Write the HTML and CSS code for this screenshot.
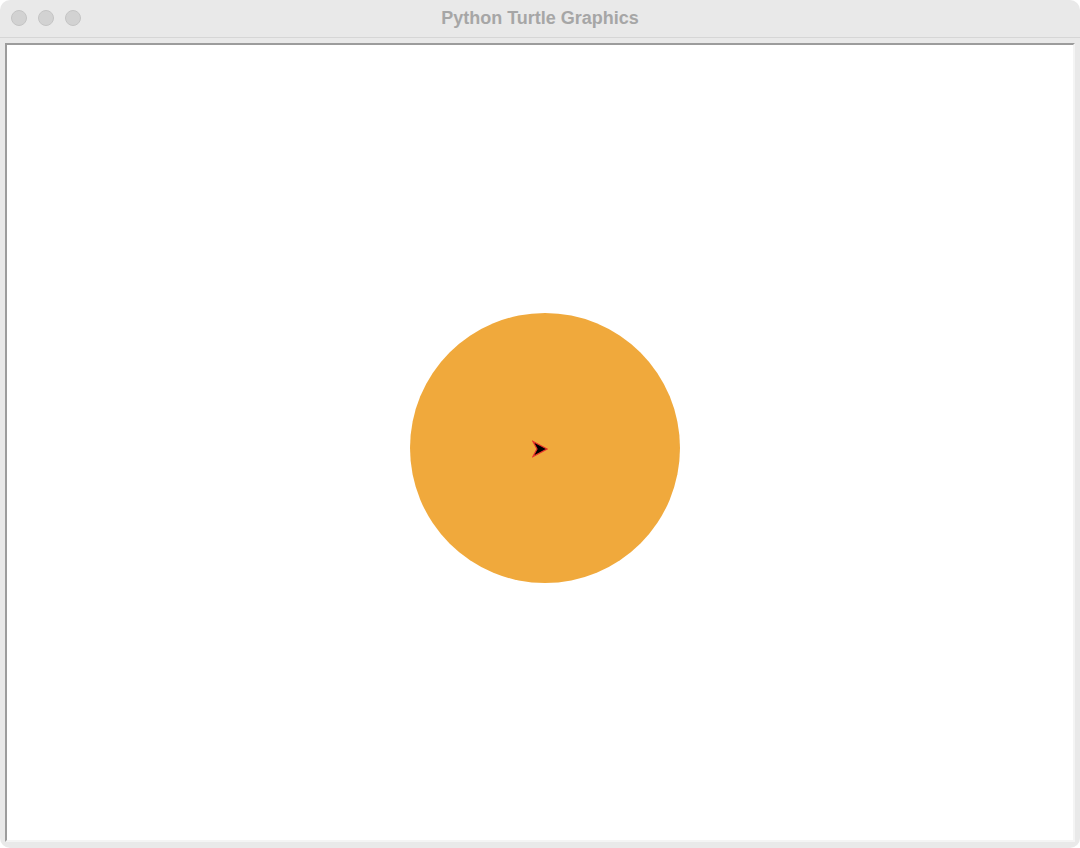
FILE: index.html
```html
<!DOCTYPE html>
<html>
<head>
<meta charset="utf-8">
<link rel="stylesheet" href="styles.css">
</head>
<body>
<div class="window">
  <div class="titlebar">
    <div class="lights">
      <span class="light"></span>
      <span class="light"></span>
      <span class="light"></span>
    </div>
    <div class="title">Python Turtle Graphics</div>
  </div>
  <div class="content">
    <div class="canvas">
      <div class="dot"></div>
      <svg class="turtle" width="16" height="18" viewBox="0 0 16 18">
        <polygon points="15,9 1,1.5 5,9 1,16.5" fill="#000" stroke="#e8332a" stroke-width="1.2" stroke-linejoin="miter"/>
      </svg>
    </div>
  </div>
</div>
</body>
</html>
```

FILE: styles.css
```css
html, body {
  margin: 0;
  padding: 0;
  background: #ffffff;
}
body {
  width: 1080px;
  height: 848px;
  overflow: hidden;
  font-family: "Liberation Sans", Arial, sans-serif;
}
.window {
  width: 1080px;
  height: 848px;
  box-sizing: border-box;
  background: #e9e9e9;
  border-radius: 10px;
  display: flex;
  flex-direction: column;
  overflow: hidden;
}
.titlebar {
  height: 37px;
  flex: none;
  position: relative;
  border-bottom: 1px solid #d6d6d6;
  display: flex;
  align-items: center;
  justify-content: center;
}
.lights {
  position: absolute;
  left: 11px;
  top: 10px;
  display: flex;
  gap: 11px;
}
.light {
  width: 16px;
  height: 16px;
  box-sizing: border-box;
  border-radius: 50%;
  background: #d2d2d2;
  border: 1px solid #c4c4c4;
}
.title {
  font-weight: bold;
  font-size: 18px;
  color: #a6a6a6;
}
.content {
  flex: 1;
  padding: 5px 5px 6px 5px;
  display: flex;
}
.canvas {
  flex: 1;
  position: relative;
  background: #ffffff;
  border-top: 2px solid #9c9c9c;
  border-left: 2px solid #9c9c9c;
  border-right: 2px solid #f4f4f4;
  border-bottom: 2px solid #f4f4f4;
}
.dot {
  position: absolute;
  left: 403px;
  top: 268px;
  width: 270px;
  height: 270px;
  border-radius: 50%;
  background: #f0a93c;
}
.turtle {
  position: absolute;
  left: 525px;
  top: 395px;
}
```
